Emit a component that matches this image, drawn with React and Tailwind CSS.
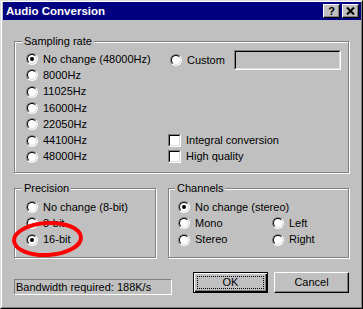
import React from 'react';

// Win95 style radio button
const Radio = ({ checked }) => (
  <span className="block w-[12px] h-[12px] shrink-0 rounded-full border border-t-[#808080] border-l-[#808080] border-r-white border-b-white">
    <span className="flex w-full h-full items-center justify-center rounded-full border border-t-black border-l-black border-r-[#dfdfdf] border-b-[#dfdfdf] bg-white">
      {checked && <span className="block w-[4px] h-[4px] rounded-full bg-black" />}
    </span>
  </span>
);

const Checkbox = () => (
  <span className="block w-[13px] h-[13px] shrink-0 border border-t-[#808080] border-l-[#808080] border-r-white border-b-white">
    <span className="block w-full h-full border border-t-black border-l-black border-r-[#dfdfdf] border-b-[#dfdfdf] bg-white" />
  </span>
);

const Option = ({ label, checked }) => (
  <div className="flex h-[16.3px] items-center gap-[5px]">
    <Radio checked={checked} />
    <span>{label}</span>
  </div>
);

const Check = ({ label }) => (
  <div className="flex h-[16.3px] items-center gap-[5px]">
    <Checkbox />
    <span>{label}</span>
  </div>
);

// etched group box, label sits over the top edge
const Group = ({ label, labelClass = 'left-[7px]', className = '', children }) => (
  <div className={`relative border border-[#808080] shadow-[inset_1px_1px_0_#fff,1px_1px_0_#fff] ${className}`}>
    <span className={`absolute -top-[7px] ${labelClass} bg-[#c0c0c0] px-[2px] leading-[13px]`}>{label}</span>
    {children}
  </div>
);

const rates = ['No change (48000Hz)', '8000Hz', '11025Hz', '16000Hz', '22050Hz', '44100Hz', '48000Hz'];

export default function App() {
  return (
    <div className="relative w-[363px] h-[309px] bg-[#c0c0c0] font-['Liberation_Sans',Arial,sans-serif] text-[11px] leading-[13px] text-black">
      <div className="w-full h-full border border-[#dfdfdf] border-r-black border-b-black">
        <div className="flex flex-col w-full h-full border border-white border-r-[#808080] border-b-[#808080] pl-px">
          {/* Title bar */}
          <div className="flex h-[18px] items-center justify-between bg-[#000080] pl-[3px] pr-[2px]">
            <span className="text-[11.5px] font-bold text-white">Audio Conversion</span>
            <div className="flex gap-[2px]">
              <button className="flex w-[17px] h-[14px] items-center justify-center border border-t-white border-l-white border-r-black border-b-black bg-[#c0c0c0] shadow-[inset_-1px_-1px_0_#808080] text-[11px] font-bold leading-none">
                ?
              </button>
              <button className="flex w-[17px] h-[14px] items-center justify-center border border-t-white border-l-white border-r-black border-b-black bg-[#c0c0c0] shadow-[inset_-1px_-1px_0_#808080]">
                <svg width="9" height="8" viewBox="0 0 9 8">
                  <path d="M1 0.5 L8 7.5 M8 0.5 L1 7.5" stroke="black" strokeWidth="2" />
                </svg>
              </button>
            </div>
          </div>

          {/* Body */}
          <div className="flex flex-col pl-[11px] pr-[12px]">
            <Group label="Sampling rate" className="mt-[21px] h-[132px] pt-[9px] pl-[11px]">
              <div className="grid grid-cols-[142px_1fr]">
                <div className="flex flex-col">
                  {rates.map((r, i) => (
                    <Option key={r} label={r} checked={i === 0} />
                  ))}
                </div>
                <div className="flex flex-col justify-between">
                  <div className="-mt-[1px] flex h-[20px] items-center">
                    <span className="ml-[2px]"><Radio /></span>
                    <span className="ml-[5px]">Custom</span>
                    <span className="ml-auto mr-[7px] block w-[107px] h-[20px] border border-t-[#808080] border-l-[#808080] border-r-white border-b-white">
                      <span className="block w-full h-full border border-t-black border-l-black border-r-[#dfdfdf] border-b-[#dfdfdf]" />
                    </span>
                  </div>
                  <div className="flex flex-col">
                    <Check label="Integral conversion" />
                    <Check label="High quality" />
                  </div>
                </div>
              </div>
            </Group>

            <div className="mt-[15px] flex gap-[12px]">
              <Group label="Precision" className="w-[142px] h-[70px] pt-[10px] pl-[11px]">
                <Option label="No change (8-bit)" />
                <Option label="8-bit" />
                <Option label="16-bit" checked />
              </Group>
              <Group label="Channels" labelClass="left-[6px]" className="w-[181px] h-[70px] pt-[10px] pl-[9px]">
                <Option label="No change (stereo)" checked />
                <div className="grid grid-cols-[94px_1fr]">
                  <Option label="Mono" />
                  <Option label="Left" />
                  <Option label="Stereo" />
                  <Option label="Right" />
                </div>
              </Group>
            </div>

            <div className="mt-[14px] flex items-start">
              <div className="mt-[7px] w-[158px] h-[16px] border border-t-[#808080] border-l-[#808080] border-r-white border-b-white pl-px leading-[14px]">
                Bandwidth required: 188K/s
              </div>
              <div className="ml-auto flex gap-[6px]">
                <button className="flex w-[75px] h-[21px] items-center justify-center border border-black bg-[#c0c0c0] shadow-[inset_1px_1px_0_#fff,inset_-1px_-1px_0_#000,inset_-2px_-2px_0_#808080] p-[3px]">
                  <span className="flex w-full h-full items-center justify-center border border-dotted border-black">OK</span>
                </button>
                <button className="flex w-[75px] h-[21px] items-center justify-center border border-t-white border-l-white border-r-black border-b-black bg-[#c0c0c0] shadow-[inset_-1px_-1px_0_#808080]">
                  Cancel
                </button>
              </div>
            </div>
          </div>
        </div>
      </div>

      {/* red annotation circle around 16-bit */}
      <svg className="absolute left-[10px] top-[219px]" width="76" height="40" viewBox="0 0 76 40">
        <ellipse cx="37.5" cy="20" rx="33.5" ry="16" fill="none" stroke="#ff0000" strokeWidth="4" transform="rotate(-3 37.5 20)" />
      </svg>
    </div>
  );
}
